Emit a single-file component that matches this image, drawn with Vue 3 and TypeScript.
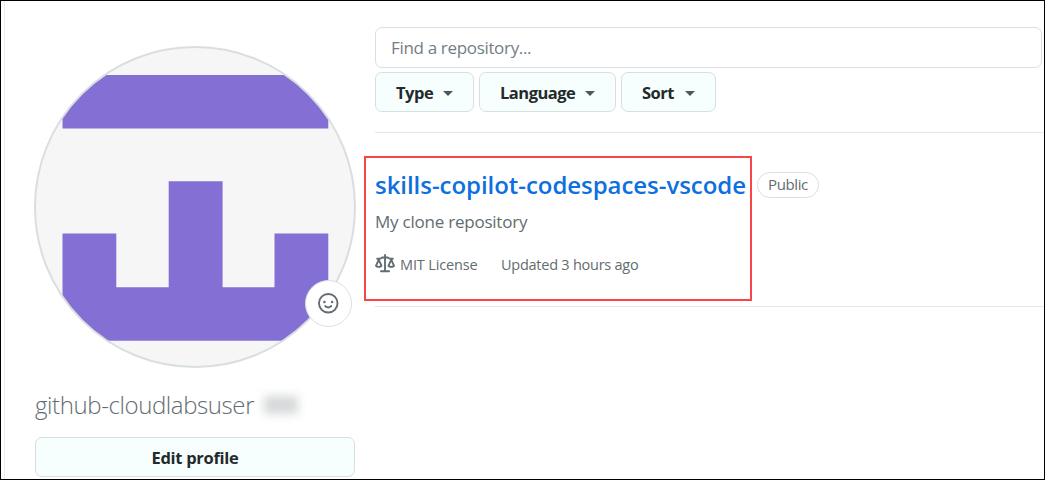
<script setup lang="ts">
interface Filter {
  label: string
  kind: string
}

const filters: Filter[] = [
  { label: 'Type', kind: 'type' },
  { label: 'Language', kind: 'language' },
  { label: 'Sort', kind: 'sort' },
]
</script>

<template>
  <div class="frame">
    <aside class="profile">
      <div class="avatar-wrap">
        <svg class="avatar" viewBox="0 0 322 322">
          <defs>
            <clipPath id="disc"><circle cx="161" cy="161" r="160" /></clipPath>
          </defs>
          <circle cx="161" cy="161" r="160" fill="#f6f6f6" />
          <path
            clip-path="url(#disc)"
            fill="#846fd5"
            d="M28.500 29H294.300V82.600H28.500ZM28.500 187.500H82.300V241.200H134.700V135.300H188.600V241.200H240.500V187.500H294.300V294.700H28.500Z"
          />
          <circle cx="161" cy="161" r="160" fill="none" stroke="#d9dfe0" stroke-width="2" />
        </svg>
        <button class="status" aria-label="Set status">
          <svg viewBox="0 0 16 16" width="20.500" height="20.500" fill="#636c72">
            <path d="M8 0a8 8 0 1 1 0 16A8 8 0 0 1 8 0ZM1.500 8a6.500 6.500 0 1 0 13 0 6.500 6.500 0 0 0-13 0Zm3.820 1.636a.75.75 0 0 1 1.038.175l.007.009c.103.118.22.222.35.31.264.178.683.37 1.285.37.602 0 1.020-.192 1.285-.371.13-.088.247-.192.35-.31l.007-.008a.75.75 0 0 1 1.222.87l-.022-.015c.02.013.021.015.021.015v.001l-.001.002-.002.003-.005.007-.014.019a2.066 2.066 0 0 1-.184.213c-.16.166-.338.316-.53.445-.63.418-1.370.638-2.127.629-.946 0-1.652-.308-2.126-.63a3.331 3.331 0 0 1-.715-.657l-.014-.02-.005-.006-.002-.003v-.002h-.001l.613-.432-.614.43a.75.75 0 0 1 .183-1.044ZM12 7a1 1 0 1 1-2 0 1 1 0 0 1 2 0ZM5 8a1 1 0 1 1 0-2 1 1 0 0 1 0 2Z" />
          </svg>
        </button>
      </div>
      <div class="login">
        <span class="login-text">github-cloudlabsuser</span>
        <span class="redacted"></span>
      </div>
      <button class="btn edit"><span>Edit profile</span></button>
    </aside>

    <main class="repos">
      <input class="search" type="text" placeholder="Find a repository..." />
      <div class="filters">
        <button v-for="f in filters" :key="f.kind" class="btn filter" :class="f.kind">
          <span>{{ f.label }}</span>
          <i class="caret"></i>
        </button>
      </div>
      <article class="repo">
        <div class="highlight"></div>
        <div class="heading">
          <a class="title">skills-copilot-codespaces-vscode</a>
          <span class="badge">Public</span>
        </div>
        <p class="description">My clone repository</p>
        <div class="meta">
          <svg class="law" viewBox="0 0 16 16" width="20" height="20" fill="#636c72">
            <path d="M8.750.75V2h.985c.304 0 .603.08.867.231l1.290.736c.038.022.08.033.124.033h2.234a.75.75 0 0 1 0 1.500h-.427l2.111 4.692a.75.75 0 0 1-.154.838l-.53-.53.529.531-.001.002-.002.002-.006.006-.006.005-.01.01-.045.04c-.21.176-.441.327-.686.45C14.556 10.780 13.880 11 13 11a4.498 4.498 0 0 1-2.023-.454 3.544 3.544 0 0 1-.686-.45l-.045-.04-.016-.015-.006-.006-.004-.004v-.001a.75.75 0 0 1-.154-.838L12.178 4.500h-.162c-.305 0-.604-.079-.868-.231l-1.290-.736a.245.245 0 0 0-.124-.033H8.750V13h2.500a.75.75 0 0 1 0 1.500h-6.500a.75.75 0 0 1 0-1.500h2.500V3.500h-.984a.245.245 0 0 0-.124.033l-1.289.737c-.265.15-.564.23-.869.23h-.162l2.112 4.692a.75.75 0 0 1-.154.838l-.53-.53.529.531-.001.002-.002.002-.006.006-.016.015-.045.04c-.21.176-.441.327-.686.45C4.556 10.780 3.880 11 3 11a4.498 4.498 0 0 1-2.023-.454 3.544 3.544 0 0 1-.686-.45l-.045-.04-.016-.015-.006-.006-.004-.004v-.001a.75.75 0 0 1-.154-.838L2.178 4.500H1.750a.75.75 0 0 1 0-1.500h2.234a.249.249 0 0 0 .125-.033l1.288-.737c.265-.15.564-.23.869-.23h.984V.75a.75.75 0 0 1 1.500 0Zm2.945 8.477c.285.135.718.273 1.305.273s1.020-.138 1.305-.273L13 6.327Zm-10 0c.285.135.718.273 1.305.273s1.020-.138 1.305-.273L3 6.327Z" />
          </svg>
          <span class="license">MIT License</span>
          <span class="updated">Updated 3 hours ago</span>
        </div>
      </article>
    </main>
  </div>
</template>

<style>
body {
  background: #fff;
  overflow: hidden;
}
</style>

<style scoped>
* {
  box-sizing: border-box;
}
.frame {
  display: flex;
  width: 1045px;
  height: 480px;
  overflow: hidden;
  border: 1px solid #000;
  background: linear-gradient(90deg, transparent 3px, #ecece9 3px, #ecece9 4px, transparent 4px) #fff;
  font-family: "Open Sans", "Noto Sans", sans-serif;
  color: #636c70;
  white-space: nowrap;
}
.profile {
  flex: none;
  width: 322px;
  margin: 45px 19px 0 33px;
}
.avatar-wrap {
  position: relative;
  height: 322px;
}
.avatar {
  display: block;
  width: 322px;
  height: 322px;
}
.status {
  position: absolute;
  left: 271px;
  top: 234px;
  display: flex;
  align-items: center;
  justify-content: center;
  width: 47px;
  height: 47px;
  padding: 0;
  border: 1px solid #d9e0e3;
  border-radius: 50%;
  background: #fff;
}
.login {
  display: flex;
  align-items: center;
  height: 40px;
  margin: 17px 0 12px 1px;
  font-size: 24px;
  font-weight: 300;
  line-height: 40px;
}
.login-text {
  width: 218px;
  letter-spacing: -0.4px;
}
.redacted {
  width: 34px;
  height: 18px;
  margin-left: 11px;
  background: #d6d8d9;
  filter: blur(5px);
}
.btn {
  display: flex;
  align-items: center;
  justify-content: center;
  height: 40px;
  padding: 0;
  border: 1px solid #d7dfdf;
  border-radius: 7px;
  background: #f6fffe;
  color: #24292c;
  font: 700 16.5px "Open Sans", "Noto Sans", sans-serif;
  letter-spacing: -0.5px;
}
.edit {
  width: 320px;
  margin-left: 1px;
  letter-spacing: -0.3px;
}
.repos {
  flex: 1;
  min-width: 0;
  padding-top: 26px;
}
.search {
  display: block;
  width: 667px;
  height: 41px;
  margin: 0 0 4px;
  padding: 0 15px;
  border: 1px solid #d8dfe5;
  border-radius: 7px;
  background: #fff;
  font: 400 17px "Open Sans", "Noto Sans", sans-serif;
  letter-spacing: -0.33px;
}
.search::placeholder {
  color: #737d86;
  opacity: 1;
}
.filters {
  display: flex;
  gap: 5px;
  height: 61px;
  border-bottom: 1px solid #e3e6eb;
}
.filter {
  justify-content: space-between;
  padding: 0 20px;
}
.type {
  width: 99px;
}
.language {
  width: 137px;
}
.sort {
  width: 95px;
}
.caret {
  margin-top: 3px;
  border: 5px solid transparent;
  border-top-color: #50575c;
  border-bottom: 0;
}
.repo {
  position: relative;
  height: 174px;
  padding-top: 32px;
  border-bottom: 1px solid #e3e6eb;
}
.highlight {
  position: absolute;
  left: -11px;
  top: 23px;
  width: 388px;
  height: 145px;
  border: 2px solid #f84648;
}
.heading {
  display: flex;
  align-items: center;
  height: 40px;
}
.title {
  width: 370px;
  margin: -2px 12px 0 0;
  color: #0d6fe0;
  font-size: 24px;
  font-weight: 600;
  letter-spacing: -0.05px;
}
.badge {
  width: 62px;
  height: 26px;
  border: 1px solid #d9dfe2;
  border-radius: 13px;
  font-size: 15px;
  line-height: 23px;
  letter-spacing: -0.4px;
  text-align: center;
}
.description {
  height: 30px;
  margin: 2px 0 15px;
  font-size: 17px;
  line-height: 30px;
  letter-spacing: -0.23px;
}
.meta {
  display: flex;
  align-items: center;
  height: 24px;
  font-size: 14.5px;
}
.law {
  margin-top: -1px;
}
.license {
  width: 77px;
  margin: 0 24px 0 5px;
  letter-spacing: -0.15px;
}
.updated {
  letter-spacing: -0.25px;
}
</style>
